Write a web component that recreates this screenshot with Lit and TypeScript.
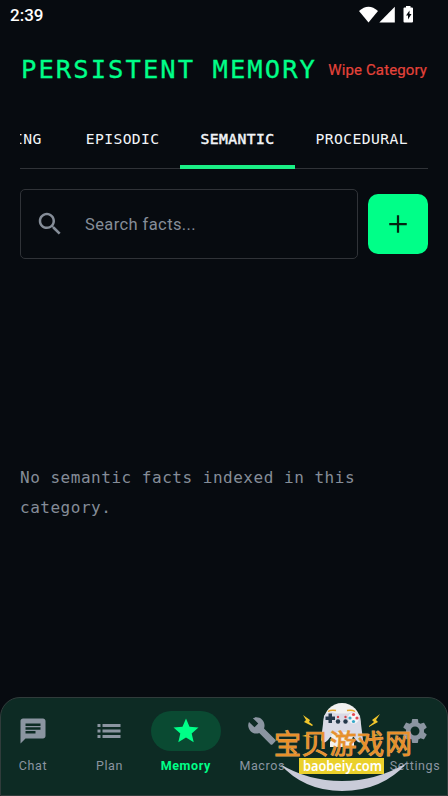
import { LitElement, html, svg, css, nothing } from "lit";
import { customElement, property } from "lit/decorators.js";
import { classMap } from "lit/directives/class-map.js";

const tabs = ["WORKING", "EPISODIC", "SEMANTIC", "PROCEDURAL"];

const icons: Record<string, string> = {
  chat: "M20 2H4c-1.1 0-1.99.9-1.99 2L2 22l4-4h14c1.1 0 2-.9 2-2V4c0-1.1-.9-2-2-2zM6 9h12v2H6V9zm8 5H6v-2h8v2zm4-6H6V6h12v2z",
  plan: "M2.800 6.400h2.400v2.400H2.800zM2.800 10.800h2.400v2.400H2.800zM2.800 15.200h2.400v2.400H2.800zM6.800 6.400H21.200v2.400H6.800zM6.800 10.800H21.200v2.400H6.800zM6.800 15.200H21.200v2.400H6.800z",
  star: "M12 17.27L18.18 21l-1.64-7.03L22 9.24l-7.19-.61L12 2 9.19 8.63 2 9.24l5.46 4.73L5.82 21z",
  build: "M22.7 19l-9.1-9.1c.9-2.3.4-5-1.5-6.9-2-2-5-2.4-7.4-1.3L9 6 6 9 1.6 4.7C.4 7.1.9 10.1 2.9 12.1c1.9 1.9 4.6 2.4 6.9 1.5l9.1 9.1c.4.4 1 .4 1.4 0l2.3-2.3c.5-.4.5-1.1.1-1.4z",
  settings: "M19.14 12.94c.04-.3.06-.61.06-.94 0-.32-.02-.64-.07-.94l2.03-1.58c.18-.14.23-.41.12-.61l-1.92-3.32c-.12-.22-.37-.29-.59-.22l-2.39.96c-.5-.38-1.03-.7-1.62-.94l-.36-2.54c-.04-.24-.24-.41-.48-.41h-3.84c-.24 0-.43.17-.47.41l-.36 2.54c-.59.24-1.13.57-1.62.94l-2.39-.96c-.22-.08-.47 0-.59.22L2.74 8.87c-.12.21-.08.47.12.61l2.03 1.58c-.05.3-.09.63-.09.94s.02.64.07.94l-2.03 1.58c-.18.14-.23.41-.12.61l1.92 3.32c.12.22.37.29.59.22l2.39-.96c.5.38 1.03.7 1.62.94l.36 2.54c.05.24.24.41.48.41h3.84c.24 0 .44-.17.47-.41l.36-2.54c.59-.24 1.13-.56 1.62-.94l2.39.96c.22.08.47 0 .59-.22l1.92-3.32c.12-.22.07-.47-.12-.61l-2.01-1.58zM12 15.6c-1.98 0-3.6-1.62-3.6-3.6s1.62-3.6 3.6-3.6 3.6 1.62 3.6 3.6-1.62 3.6-3.6 3.6z",
  search: "M15.5 14h-.79l-.28-.27C15.41 12.59 16 11.11 16 9.5 16 5.91 13.09 3 9.5 3S3 5.91 3 9.5 5.91 16 9.5 16c1.61 0 3.09-.59 4.23-1.57l.27.28v.79l5 4.99L20.49 19l-4.99-5zm-6 0C7.01 14 5 11.99 5 9.5S7.01 5 9.5 5 14 7.01 14 9.5 11.99 14 9.5 14z",
  add: "M19 12.900h-6.100v6.100h-1.800v-6.100H5v-1.800h6.100V5h1.800v6.100H19z",
};

const navItems = [
  { label: "Chat", icon: "chat" },
  { label: "Plan", icon: "plan" },
  { label: "Memory", icon: "star", active: true },
  { label: "Macros", icon: "build" },
  { label: "", icon: "" },
  { label: "Settings", icon: "settings" },
];

const icon = (name: string) => html`
  <svg class="icon" viewBox="0 0 24 24"><path d=${icons[name]} /></svg>
`;

@customElement("status-bar")
class StatusBar extends LitElement {
  static styles = css`
    :host {
      display: flex;
      justify-content: space-between;
      height: 30px;
      padding-left: 10px;
      color: #fff;
      font: 500 17px/31px Roboto, sans-serif;
    }
    svg {
      width: 98px;
      height: 30px;
      fill: #fff;
    }
  `;

  render() {
    return html`
      <span>2:39</span>
      <svg viewBox="350 0 98 30">
        <path d="M359 11q9.500-8.500 19 0l-9.500 11.500z" />
        <path d="M379.300 22.500l15.500-15.700v15.700z" />
        <path fill-rule="evenodd" d="M404.500 7.500h1.500v-1.500h4.500v1.500h1.500q1 0 1 1v13q0 1-1 1h-7.500q-1 0-1-1v-13q0-1 1-1zM409.500 10.500l-3.500 5h2v4l3.500-5.500h-2z" />
      </svg>
    `;
  }
}

@customElement("nav-item")
class NavItem extends LitElement {
  @property() label = "";
  @property() icon = "";
  @property({ type: Boolean, reflect: true }) active = false;

  static styles = css`
    :host {
      display: flex;
      flex-direction: column;
      align-items: center;
      flex: 0 0 76.4px;
      color: #8b95a1;
    }
    .pill {
      display: flex;
      align-items: center;
      justify-content: center;
      width: 70px;
      height: 40px;
      border-radius: 20px;
    }
    .icon {
      width: 30px;
      height: 30px;
      fill: currentColor;
    }
    .label {
      margin-top: 6px;
      font: 400 12.500px/18px Roboto, sans-serif;
      letter-spacing: 0.6px;
      white-space: nowrap;
    }
    :host([active]) {
      color: #00ff88;
    }
    :host([active]) .pill {
      background: #0a4a32;
    }
    :host([active]) .label {
      font-weight: 700;
    }
  `;

  render() {
    return html`
      <div class="pill">${this.icon ? icon(this.icon) : nothing}</div>
      <span class="label">${this.label}</span>
    `;
  }
}

@customElement("site-stamp")
class SiteStamp extends LitElement {
  static styles = css`
    :host {
      display: block;
      width: 148px;
      height: 98px;
    }
    svg {
      display: block;
    }
    .name {
      font: 400 27px "Noto Sans CJK SC", sans-serif;
      fill: #e8902a;
      stroke: #dfa25a;
      stroke-width: 1px;
      paint-order: stroke;
    }
    .domain {
      font: 600 14px "Noto Sans", sans-serif;
      fill: #fff;
    }
  `;

  render() {
    return html`
      <svg width="148" height="98" viewBox="270 698 148 98">
        <path d="M280 764Q308 781 342 781Q376 781 407 763Q382 791 342 791Q304 791 280 764z" fill="#c9cbd8" />
        <ellipse cx="342" cy="722" rx="18.500" ry="19" fill="#f1f1f1" />
        <path d="M324 716q2-4 8-4l4 1.500h12l4-1.500q6 0 8 4l3 24q-3 5-7 0l-6-8h-16l-6 8q-5 5-7 0z" fill="#d9dae6" />
        <path d="M330 742q3-9 12-9t12 9v5h-24z" fill="#f4f2ee" />
        <path d="M328 711.500q3-2 8-1M347 710.500q5-1 8 1" fill="none" stroke="#e8a72b" stroke-width="1.500" />
        <path d="M328.500 713.500h3.500v3h3v3.500h-3v3h-3.500v-3h-3v-3.500h3z" fill="#24384a" />
        <circle cx="353.500" cy="718" r="5.500" fill="#f4f4f8" />
        ${[[353.5, 714.5, "#e34a55"], [350, 718, "#36a9c8"], [357, 718, "#e34a55"], [353.5, 721.5, "#36a9c8"]].map(
          ([x, y, fill]) => svg`<circle cx=${x} cy=${y} r="1.600" fill=${fill} />`
        )}
        <g fill="#24384a">
          <circle cx="338" cy="721.500" r="2.200" />
          <circle cx="345.500" cy="721.500" r="2.200" />
        </g>
        <g fill="#d64550">
          <circle cx="338" cy="717" r="1.200" />
          <circle cx="345.500" cy="717" r="1.200" />
        </g>
        <path d="M303 715l7 5-1 2 4 3-1 1-8-4 2-2zM380 714l-8 6 2 2-5 4v1l9-5-2-2zM302 736l7-2v2l5 2zM380 735l-7-1v2l-4 1z" fill="#f1c62c" />
        <text class="name" x="274" y="754" textLength="138">宝贝游戏网</text>
        <rect x="299" y="758" width="85" height="16" fill="#ead02b" />
        <text class="domain" x="303" y="770.500" textLength="79" lengthAdjust="spacingAndGlyphs">baobeiy.com</text>
      </svg>
    `;
  }
}

@customElement("app-root")
class AppRoot extends LitElement {
  static styles = css`
    :host {
      display: flex;
      flex-direction: column;
      position: relative;
      box-sizing: border-box;
      height: 796px;
      overflow: hidden;
      background: #070b10;
      font-family: Roboto, sans-serif;
    }
    header {
      display: flex;
      align-items: center;
      justify-content: space-between;
      height: 78px;
      padding: 0 21px;
    }
    h1 {
      margin: 0;
      color: #00ff88;
      font: 400 25.500px "DejaVu Sans Mono", monospace;
      letter-spacing: 2.060px;
      white-space: nowrap;
      -webkit-text-stroke: 0.3px currentColor;
    }
    .wipe {
      padding-top: 1px;
      color: #e5433a;
      font-size: 15px;
      font-weight: 400;
      letter-spacing: 0.12px;
      white-space: nowrap;
      -webkit-text-stroke: 0.2px currentColor;
    }
    .tabs {
      display: flex;
      justify-content: flex-end;
      height: 61px;
      margin: 0 20px;
      box-shadow: inset 0 -1px #303338;
      overflow: hidden;
    }
    .tab {
      box-sizing: border-box;
      flex: none;
      height: 61px;
      padding: 0 20px 0 21px;
      color: #f2f5f8;
      font: 400 14.700px/61px "DejaVu Sans Mono", monospace;
      letter-spacing: 0.4px;
    }
    .tab:first-child {
      padding-right: 23px;
    }
    .tab.active {
      border-bottom: 4px solid #1af086;
      -webkit-text-stroke: 0.5px currentColor;
    }
    .tools {
      display: flex;
      align-items: center;
      gap: 10px;
      margin: 20px 20px 0;
    }
    .search {
      display: flex;
      align-items: center;
      box-sizing: border-box;
      flex: 1;
      height: 70px;
      padding-left: 14px;
      border: 1px solid #303338;
      border-radius: 5px;
      color: #858d98;
      font-size: 16.500px;
      line-height: 19px;
      letter-spacing: 0.4px;
    }
    .icon {
      width: 30px;
      height: 30px;
      fill: currentColor;
    }
    .search .icon {
      margin-right: 20px;
    }
    .add {
      display: flex;
      align-items: center;
      justify-content: center;
      width: 60px;
      height: 60px;
      padding: 0;
      border: 0;
      border-radius: 10px;
      background: #00ff88;
      color: #042412;
    }
    .empty {
      display: flex;
      align-items: center;
      flex: 1;
      margin: 0 20px;
      color: #858d98;
      font: 400 16px/30px "DejaVu Sans Mono", monospace;
      letter-spacing: 0.52px;
    }
    .empty p {
      margin: 30px 0 0;
    }
    nav {
      display: flex;
      justify-content: center;
      box-sizing: border-box;
      height: 99px;
      padding-top: 13px;
      border: 1px solid #303c3b;
      border-radius: 20px 20px 0 0;
      background: #0d2b24;
    }
    site-stamp {
      position: absolute;
      left: 270px;
      top: 698px;
    }
  `;

  render() {
    return html`
      <status-bar></status-bar>
      <header>
        <h1>PERSISTENT MEMORY</h1>
        <span class="wipe">Wipe Category</span>
      </header>
      <div class="tabs">
        ${tabs.map(
          (tab) => html`<div class=${classMap({ tab: true, active: tab === "SEMANTIC" })}>${tab}</div>`
        )}
      </div>
      <div class="tools">
        <div class="search">${icon("search")}<span>Search facts...</span></div>
        <button class="add">${icon("add")}</button>
      </div>
      <div class="empty"><p>No semantic facts indexed in this category.</p></div>
      <nav>
        ${navItems.map(
          (item) => html`
            <nav-item .label=${item.label} .icon=${item.icon} ?active=${item.active}></nav-item>
          `
        )}
      </nav>
      <site-stamp></site-stamp>
    `;
  }
}
